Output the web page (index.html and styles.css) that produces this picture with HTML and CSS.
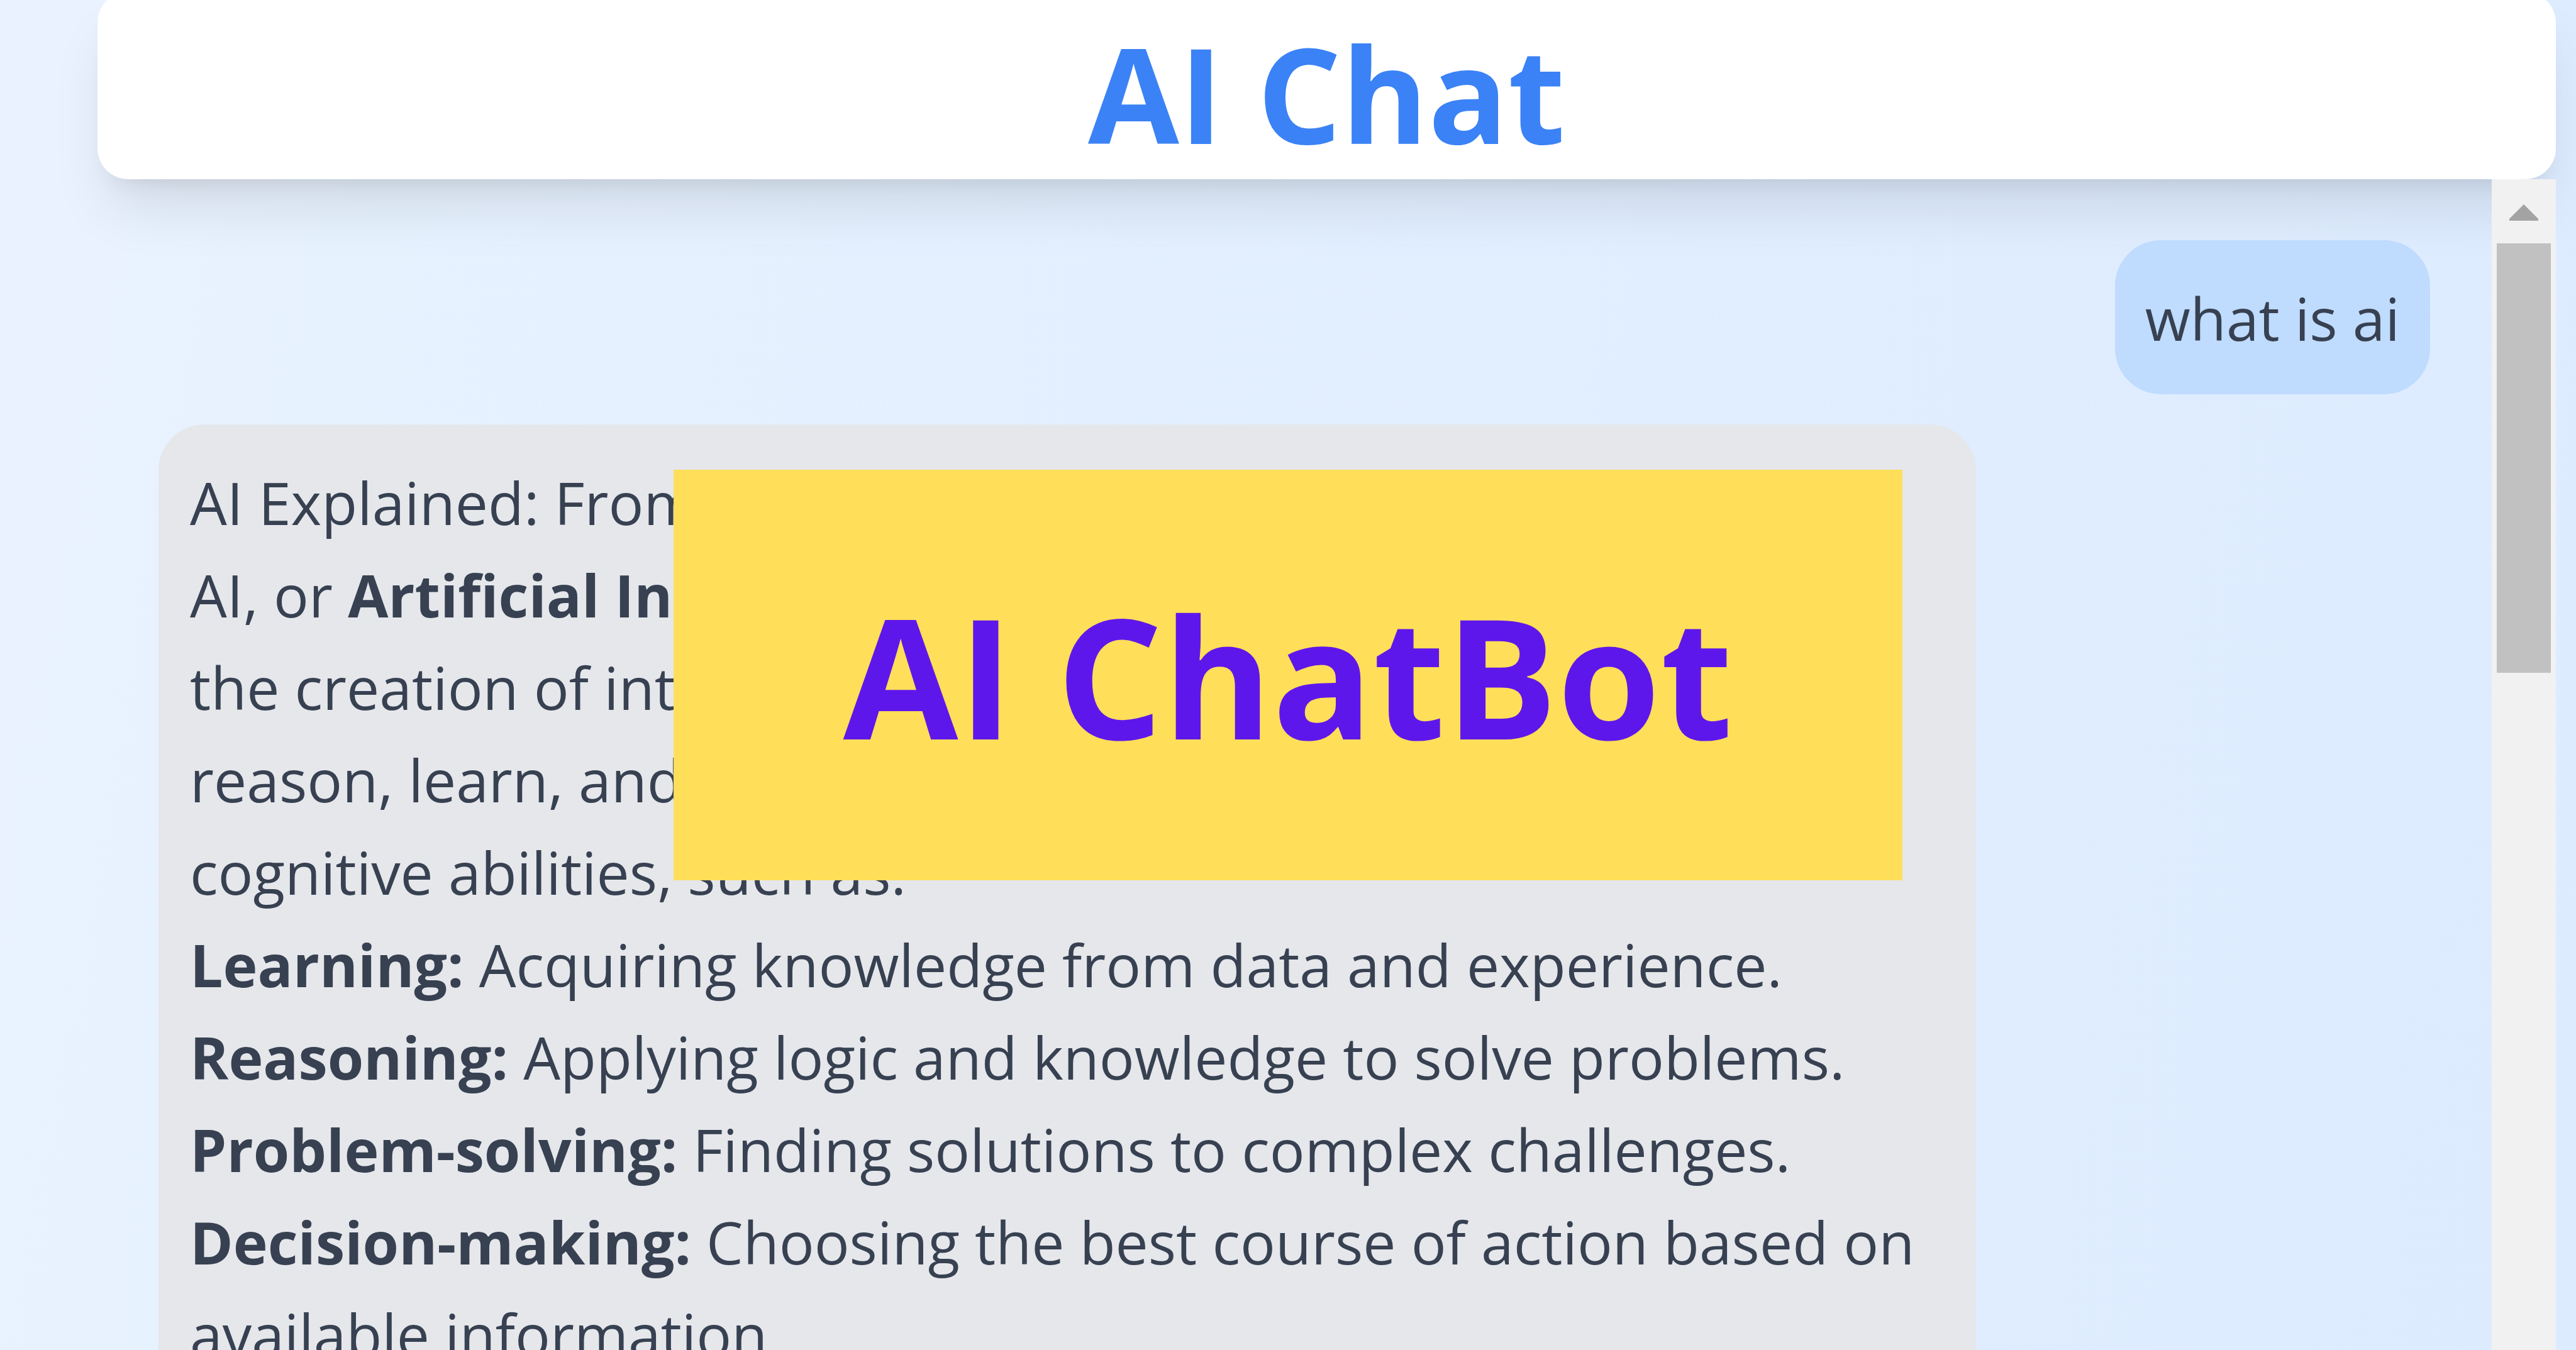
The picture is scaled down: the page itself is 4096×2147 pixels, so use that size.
FILE: index.html
```html
<!DOCTYPE html>
<html lang="en">
<head>
<meta charset="utf-8">
<title>AI Chat</title>
<link rel="stylesheet" href="styles.css">
</head>
<body>
<main class="app">
  <header class="app-header">
    <h1 class="app-title">AI Chat</h1>
  </header>
  <section class="chat">
    <div class="messages">
      <div class="bubble bubble-user">what is ai</div>
      <article class="bubble bubble-bot">
        AI Explained: From<br>
        AI, or <strong>Artificial Intelligence</strong><br>
        the creation of intelligent<br>
        reason, learn, and<br>
        cognitive abilities, such as:<br>
        <strong>Learning:</strong> Acquiring knowledge from data and experience.<br>
        <strong>Reasoning:</strong> Applying logic and knowledge to solve problems.<br>
        <strong>Problem-solving:</strong> Finding solutions to complex challenges.<br>
        <strong>Decision-making:</strong> Choosing the best course of action based on<br>
        available information.
      </article>
    </div>
    <div class="scrollbar">
      <button class="scroll-up" type="button" aria-label="Scroll up">
        <svg class="scroll-arrow" viewBox="0 0 46 26" aria-hidden="true"><path d="M23 0L46 23V26H0V23Z" fill="#a3a3a3"/></svg>
      </button>
      <div class="scroll-thumb"></div>
    </div>
  </section>
</main>
<div class="overlay">
  <p class="banner">AI ChatBot</p>
</div>
</body>
</html>
```
FILE: styles.css
```css
* {
  box-sizing: border-box;
}

body {
  margin: 0;
  height: 100vh;
  overflow: hidden;
  background: linear-gradient(100deg, #ebf2ff, #e7f2ff 14%, #e1eeff 60%, #ddebff);
  color: #374151;
  font-family: "Open Sans", "Noto Sans", sans-serif;
  font-size: 93px;
  line-height: 147px;
}

.app {
  display: flex;
  flex-direction: column;
  height: 100vh;
  padding: 0 32px 0 155px;
}

.app-header {
  flex: none;
  margin-top: -13px;
  padding: 36px 49px 12px;
  border-radius: 49px;
  background: #fff;
  box-shadow: 0 61px 92px -18px rgb(0 0 0 / 0.1), 0 24px 37px -24px rgb(0 0 0 / 0.1);
  text-align: center;
}

.app-title {
  margin: 0;
  color: #3b82f6;
  font-size: 210px;
  line-height: 250px;
  font-weight: 700;
}

.chat {
  display: flex;
  flex: 1;
  min-height: 0;
}

.messages {
  display: flex;
  flex: 1;
  flex-direction: column;
  align-items: flex-start;
  gap: 48px;
  padding: 97px 98px 0 97px;
  overflow: hidden;
}

.bubble {
  flex: none;
  padding: 51px 48px 47px;
  border-radius: 73px;
}

.bubble-user {
  align-self: flex-end;
  background: #bfdbfe;
}

.bubble-bot {
  width: 80%;
  padding-left: 50px;
  background: #e5e7eb;
}

.scrollbar {
  display: flex;
  flex: none;
  flex-direction: column;
  align-items: center;
  width: 102px;
  background: #f1f1f1;
}

.scroll-up {
  display: flex;
  align-items: center;
  justify-content: center;
  width: 100%;
  height: 102px;
  padding: 4px 0 0;
  border: 0;
  background: none;
}

.scroll-arrow {
  width: 46px;
  height: 26px;
}

.scroll-thumb {
  width: 86px;
  height: 683px;
  background: #c1c1c1;
}

/* The header's shadow must fall under the scrollbar, not over it. */
.scrollbar {
  position: relative;
}

.overlay {
  position: fixed;
  inset: 0;
  display: flex;
  align-items: center;
  justify-content: center;
  pointer-events: none;
}

.banner {
  margin: 0;
  padding: 146px 270px;
  background: #ffde59;
  color: #5e17eb;
  font-size: 265px;
  line-height: 361px;
  font-weight: 700;
}
```
